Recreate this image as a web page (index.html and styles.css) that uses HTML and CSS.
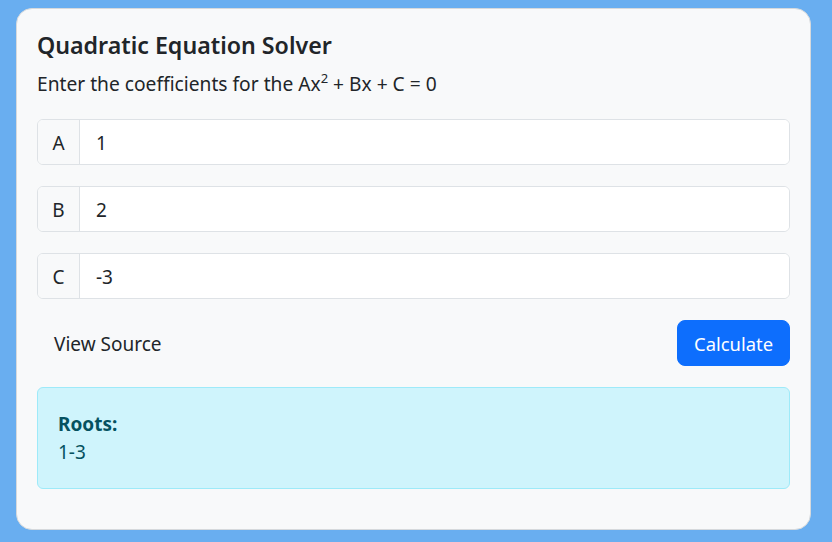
FILE: index.html
```html
<!DOCTYPE html>
<html lang="en">
<head>
<meta charset="utf-8">
<title>Quadratic Equation Solver</title>
<link rel="stylesheet" href="styles.css">
</head>
<body>
<div class="page">
  <div class="card">
    <h1 class="title">Quadratic Equation Solver</h1>
    <p class="lead">Enter the coefficients for the Ax<sup>2</sup> + Bx + C = 0</p>
    <div class="group">
      <span class="label">A</span>
      <input class="field" type="text" value="1">
    </div>
    <div class="group">
      <span class="label">B</span>
      <input class="field" type="text" value="2">
    </div>
    <div class="group">
      <span class="label">C</span>
      <input class="field" type="text" value="-3">
    </div>
    <div class="actions">
      <a class="btn btn-link" href="#">View Source</a>
      <button class="btn btn-primary" type="button">Calculate</button>
    </div>
    <div class="alert">
      <div class="alert-title">Roots:</div>
      <div class="alert-text">1-3</div>
    </div>
  </div>
</div>
</body>
</html>
```

FILE: styles.css
```css
html, body {
  margin: 0;
  padding: 0;
  background: #69aef0;
  height: 100%;
}
body {
  font-family: "Noto Sans", "Open Sans", sans-serif;
  font-size: 19px;
  color: #212529;
}
.page {
  padding: 8px 21px 0 16px;
}
.card {
  background: #f8f9fa;
  border: 1px solid #d6d9dc;
  border-radius: 16px;
  padding: 20px 20px 40px 20px;
}
.title {
  margin: 0;
  font-size: 23.2px;
  font-weight: 600;
  line-height: 32px;
  color: #212529;
}
.lead {
  margin: 9px 0 0 0;
  line-height: 28px;
  font-size: 19.2px;
}
.lead sup {
  font-size: 13px;
  line-height: 0;
  vertical-align: 0;
  position: relative;
  top: -8px;
}
.group {
  display: flex;
  margin-top: 21px;
  height: 46px;
  border: 1px solid #dee2e6;
  border-radius: 6px;
  box-sizing: border-box;
  overflow: hidden;
  background: #fff;
}
.label {
  display: flex;
  align-items: center;
  justify-content: center;
  width: 42px;
  padding-top: 2px;
  box-sizing: border-box;
  background: #f8f9fa;
  border-right: 1px solid #dee2e6;
  font-size: 19px;
}
.field {
  flex: 1;
  border: 0;
  outline: 0;
  padding: 2px 16px 0 16px;
  font-family: inherit;
  font-size: 19px;
  color: #212529;
  background: #fff;
}
.actions {
  display: flex;
  justify-content: space-between;
  align-items: center;
  margin-top: 21px;
}
.btn {
  display: inline-block;
  box-sizing: border-box;
  height: 46px;
  padding: 1px 16px 0 16px;
  border-radius: 8px;
  font-family: inherit;
  font-size: 19px;
  line-height: 44px;
  border: 1px solid transparent;
  text-decoration: none;
}
.btn-link {
  color: #212529;
}
.btn-primary {
  background: #0d6efd;
  border-color: #0d6efd;
  color: #fff;
  font-size: 18.4px;
}
.alert {
  margin-top: 21px;
  background: #cff4fc;
  border: 1px solid #9eeaf9;
  border-radius: 6px;
  padding: 22px 20px 22px 20px;
  color: #055160;
}
.alert-title {
  font-weight: 700;
  line-height: 28px;
}
.alert-text {
  line-height: 28px;
}
```
